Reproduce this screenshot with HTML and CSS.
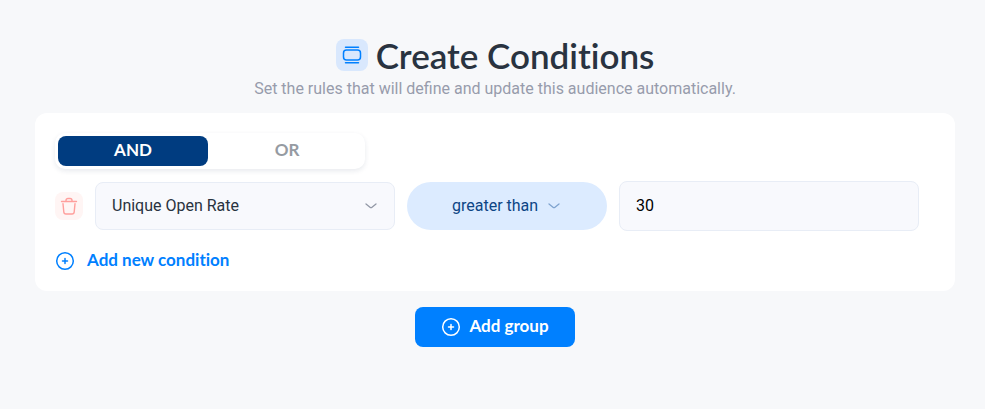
FILE: index.html
```html
<!DOCTYPE html>
<html lang="en">
<head>
    <meta charset="UTF-8">
    <meta name="viewport" content="width=device-width, initial-scale=1.0">
    <title>Create Conditions</title>
    <link rel="stylesheet" href="styles.css">
</head>
<body>

    <main class="conditions-page">
        <header class="page-header">
            <div class="title-row">
                <span class="title-icon">
                    <svg width="20" height="20" viewBox="0 0 20 20" fill="none" stroke="#0080ff" stroke-width="1.5" stroke-linecap="round">
                        <rect x="1.5" y="5" width="17" height="10" rx="3"/>
                        <path d="M3.5 2.25h13M3.5 17.75h13"/>
                    </svg>
                </span>
                <h1>Create Conditions</h1>
            </div>
            <p class="subtitle">Set the rules that will define and update this audience automatically.</p>
        </header>

        <!-- Condition group -->
        <section class="group-card">
            <div class="operator-toggle">
                <button type="button" class="toggle-button active" aria-pressed="true">AND</button>
                <button type="button" class="toggle-button" aria-pressed="false">OR</button>
            </div>

            <div class="condition-row">
                <button type="button" class="delete-button" aria-label="Delete condition">
                    <svg width="18" height="18" viewBox="0 0 18 18" fill="none" stroke="#ff9f9c" stroke-width="1.4" stroke-linecap="round" stroke-linejoin="round">
                        <path d="M1.5 4.5h15"/>
                        <path d="M6 4.3V3.5a2 2 0 0 1 2-2h2a2 2 0 0 1 2 2v.8"/>
                        <path d="M3 6.8l.8 8.2a2.2 2.2 0 0 0 2.2 2h6a2.2 2.2 0 0 0 2.2-2l.8-8.2"/>
                    </svg>
                </button>
                <div class="select-box">
                    <select class="field-select" aria-label="Field">
                        <option>Unique Open Rate</option>
                    </select>
                    <svg class="chevron" width="12" height="8" viewBox="0 0 12 8" fill="none" stroke="#9298a6" stroke-width="1.3" stroke-linecap="round" stroke-linejoin="round">
                        <path d="M1 2l4 3.2a1.6 1.6 0 0 0 2 0L11 2"/>
                    </svg>
                </div>
                <div class="select-box comparison">
                    <select class="comparison-select" aria-label="Comparison">
                        <option>greater than</option>
                    </select>
                    <svg class="chevron" width="12" height="8" viewBox="0 0 12 8" fill="none" stroke="#7fa3cf" stroke-width="1.3" stroke-linecap="round" stroke-linejoin="round">
                        <path d="M1 2l4 3.2a1.6 1.6 0 0 0 2 0L11 2"/>
                    </svg>
                </div>
                <input class="value-input" type="text" value="30" aria-label="Value">
            </div>

            <button type="button" class="add-condition">
                <svg width="20" height="20" viewBox="0 0 20 20" fill="none" stroke="currentColor" stroke-width="1.5" stroke-linecap="round">
                    <circle cx="10" cy="10" r="8.3"/>
                    <path d="M10 7.5v5M7.5 10h5"/>
                </svg>
                <span class="button-text">Add new condition</span>
            </button>
        </section>

        <button type="button" class="add-group">
            <svg width="20" height="20" viewBox="0 0 20 20" fill="none" stroke="currentColor" stroke-width="1.5" stroke-linecap="round">
                <circle cx="10" cy="10" r="8.3"/>
                <path d="M10 7.5v5M7.5 10h5"/>
            </svg>
            <span class="button-text">Add group</span>
        </button>
    </main>

</body>
</html>
```

FILE: styles.css
```css
* {
    box-sizing: border-box;
}
body {
    margin: 0;
    background-color: #f7f8fa;
    color: #293340;
    font-family: Roboto, sans-serif;
    font-size: 16px;
}
button, input, select {
    font-family: inherit;
    font-size: 16px;
}
button {
    border: none;
    padding: 0;
    cursor: pointer;
}
svg {
    display: block;
    flex: none;
}
h1, .toggle-button, .add-condition, .add-group {
    font-family: Lato, sans-serif;
    font-weight: 700;
    font-variant-ligatures: none;
}
.conditions-page {
    display: flex;
    flex-direction: column;
    align-items: center;
    padding: 35px 30px 20px 35px;
}
.page-header {
    margin-bottom: 12px;
    text-align: center;
}
.title-row {
    display: flex;
    align-items: center;
    justify-content: center;
    gap: 8px;
}
.title-icon {
    display: flex;
    align-items: center;
    justify-content: center;
    width: 32px;
    height: 32px;
    border-radius: 8px;
    background-color: #d9e8fd;
}
h1 {
    margin: 0;
    font-size: 35px;
    font-weight: 600;
    line-height: 40px;
}
.subtitle {
    margin: 2px 0 0;
    line-height: 24px;
    color: #979cac;
}
.group-card {
    width: 100%;
    padding: 20px 20px 12px;
    border-radius: 12px;
    background-color: #fff;
}
.operator-toggle {
    display: flex;
    gap: 4px;
    width: 310px;
    padding: 3px;
    border-radius: 10px;
    background-color: #fff;
    box-shadow: 0 2px 5px rgba(30, 50, 90, 0.1);
}
.toggle-button {
    flex: 1;
    height: 30px;
    padding-bottom: 3px;
    border-radius: 8px;
    background-color: transparent;
    color: #969ba2;
    font-size: 17px;
}
.toggle-button.active {
    background-color: #003c80;
    color: #fff;
}
.condition-row {
    display: grid;
    grid-template-columns: 28px 3fr 2fr 3fr;
    align-items: center;
    gap: 12px;
    margin: 12px 16px 12px 0;
}
.delete-button {
    display: flex;
    align-items: center;
    justify-content: center;
    height: 28px;
    border-radius: 8px;
    background-color: #fff5f4;
}
.select-box {
    display: grid;
    align-items: center;
}
.select-box select, .chevron {
    grid-area: 1 / 1;
}
.select-box select {
    appearance: none;
    width: 100%;
    height: 48px;
    cursor: pointer;
}
.chevron {
    justify-self: end;
    margin-right: 18px;
    pointer-events: none;
}
.comparison .chevron {
    margin-right: 47px;
}
.field-select {
    padding: 0 40px 2px 16px;
    border: 1px solid #e8edf6;
    border-radius: 8px;
    background-color: #f8f9fd;
    color: #293340;
}
.comparison-select {
    padding: 0 60px 2px 45px;
    border: none;
    border-radius: 24px;
    background-color: #dcebff;
    color: #0d4585;
}
.value-input {
    width: 100%;
    height: 50px;
    padding: 0 16px 2px;
    border: 1px solid #e8edf6;
    border-radius: 8px;
    background-color: #f8f9fd;
    color: #000;
}
.add-condition {
    display: flex;
    align-items: center;
    gap: 12px;
    height: 36px;
    background-color: transparent;
    color: #0080ff;
    font-size: 17px;
}
.add-group {
    display: flex;
    align-items: center;
    justify-content: center;
    gap: 8px;
    width: 160px;
    height: 40px;
    margin-top: 16px;
    border-radius: 8px;
    background-color: #0080ff;
    color: #fff;
    font-size: 17px;
}
.button-text {
    padding-bottom: 3px;
}
```
